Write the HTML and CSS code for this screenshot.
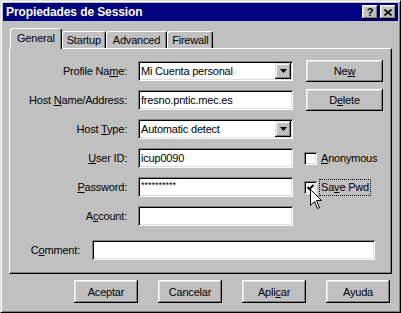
FILE: index.html
```html
<!DOCTYPE html>
<html lang="es">
<head>
<meta charset="UTF-8" />
<title>Propiedades de Session</title>
<link rel="stylesheet" href="styles.css">
</head>
<body>
  <div class="window">
    <div class="titlebar">
      <span class="title">Propiedades de Session</span>
      <div class="title-btns">
        <span class="tbtn help">?</span>
        <span class="tbtn">
          <svg width="8" height="7" viewBox="0 0 8 7"><path d="M0.5 0.5 L7.5 6.5 M7.5 0.5 L0.5 6.5" stroke="#000" stroke-width="1.6" fill="none"/></svg>
        </span>
      </div>
    </div>

    <div class="content">
      <div class="tabs">
        <div class="tab active">General</div>
        <div class="tab">Startup</div>
        <div class="tab wide">Advanced</div>
        <div class="tab">Firewall</div>
      </div>

      <div class="panel">
        <div class="form">
          <label class="lbl">Profile Na<u>m</u>e:</label>
          <div class="field combo"><span>Mi Cuenta personal</span><span class="drop"><svg width="7" height="4" viewBox="0 0 7 4"><polygon points="0,0 7,0 3.5,4" fill="#000"/></svg></span></div>
          <div class="btn side">Ne<u>w</u></div>

          <label class="lbl">Host <u>N</u>ame/Address:</label>
          <div class="field">fresno.pntic.mec.es</div>
          <div class="btn side">D<u>e</u>lete</div>

          <label class="lbl">Host <u>T</u>ype:</label>
          <div class="field combo"><span>Automatic detect</span><span class="drop"><svg width="7" height="4" viewBox="0 0 7 4"><polygon points="0,0 7,0 3.5,4" fill="#000"/></svg></span></div>
          <div></div>

          <label class="lbl"><u>U</u>ser ID:</label>
          <div class="field">icup0090</div>
          <div class="check-row"><span class="box"></span><span><u>A</u>nonymous</span></div>

          <label class="lbl"><u>P</u>assword:</label>
          <div class="field"><span class="stars">**********</span></div>
          <div class="check-row"><span class="box"><svg width="9" height="9" viewBox="0 0 9 9"><polyline points="1.5,4 3.5,6.2 7.5,1.8" stroke="#000" stroke-width="2" fill="none"/></svg></span><span class="focus">Sa<u>v</u>e Pwd</span></div>

          <label class="lbl">A<u>c</u>count:</label>
          <div class="field"></div>
          <div></div>
        </div>

        <div class="comment-row">
          <label class="lbl comment-lbl">C<u>o</u>mment:</label>
          <div class="field comment"></div>
        </div>
      </div>

      <div class="actions">
        <div class="btn action">Aceptar</div>
        <div class="btn action">Cancelar</div>
        <div class="btn action">Apli<u>c</u>ar</div>
        <div class="btn action">Ayuda</div>
      </div>
    </div>

    <svg class="cursor" width="13" height="21" viewBox="0 0 13 21">
      <polygon points="0.5,0.5 0.5,16.5 4.5,12.5 7.5,19.5 9.5,18.5 6.5,11.5 11.5,11.5" fill="#fff" stroke="#000" stroke-width="1"/>
    </svg>
  </div>
</body>
</html>
```

FILE: styles.css
```css
* {
  box-sizing: border-box;
}

body {
  margin: 0;
  background-color: #c0c0c0;
  font-family: "Liberation Sans", Arial, sans-serif;
  font-size: 11px;
  letter-spacing: -0.2px;
  color: #000;
}

/* Ventana */
.window {
  position: relative;
  width: 401px;
  height: 313px;
  background-color: #c0c0c0;
  border: 1px solid;
  border-color: #dfdfdf #000 #000 #dfdfdf;
  box-shadow: inset 1px 1px #fff, inset -1px -1px #808080;
  padding: 2px;
}

.titlebar {
  height: 18px;
  background-color: #000080;
  color: #fff;
  display: flex;
  align-items: center;
  justify-content: space-between;
  padding: 0 2px 0 3px;
}
.title {
  font-weight: 700;
  font-size: 12px;
  letter-spacing: -0.1px;
}
.title-btns {
  display: flex;
  gap: 2px;
}
.tbtn {
  width: 16px;
  height: 14px;
  display: flex;
  align-items: center;
  justify-content: center;
  background-color: #c0c0c0;
  box-shadow: inset -1px -1px #000, inset 1px 1px #fff, inset -2px -2px #808080, inset 2px 2px #dfdfdf;
  color: #000;
  font-weight: 700;
  font-size: 11px;
  letter-spacing: 0;
}

.content {
  padding: 7px 6px 0;
}

/* Pestañas */
.tabs {
  height: 20px;
  display: flex;
  align-items: flex-end;
  padding-left: 1px;
}
.tab {
  height: 17px;
  padding: 0 4px;
  display: flex;
  align-items: center;
  border-top: 1px solid #fff;
  border-left: 1px solid #fff;
  border-right: 1px solid #000;
  box-shadow: inset -1px 0 #808080;
  border-radius: 3px 3px 0 0;
  background-color: #c0c0c0;
}
.tab.wide {
  padding: 0 6px;
}
.tab.active {
  position: relative;
  z-index: 1;
  height: 21px;
  margin-bottom: -1px;
  padding: 0 6px 2px;
}

/* Panel */
.panel {
  height: 226px;
  border: 1px solid;
  border-color: #fff #000 #000 #fff;
  box-shadow: inset -1px -1px #808080;
  padding-top: 12px;
}

.form {
  display: grid;
  grid-template-columns: 117px 155px 79px;
  grid-auto-rows: 20px;
  column-gap: 11px;
  row-gap: 9px;
}

.lbl {
  align-self: center;
  text-align: right;
  white-space: nowrap;
}

.field {
  height: 20px;
  background-color: #fff;
  box-shadow: inset 1px 1px #808080, inset -1px -1px #fff, inset 2px 2px #000, inset -2px -2px #dfdfdf;
  padding: 0 3px;
  display: flex;
  align-items: center;
  white-space: nowrap;
}
.combo {
  padding-right: 2px;
}
.drop {
  margin-left: auto;
  width: 16px;
  height: 16px;
  display: flex;
  align-items: center;
  justify-content: center;
  background-color: #c0c0c0;
  box-shadow: inset -1px -1px #000, inset 1px 1px #dfdfdf, inset -2px -2px #808080, inset 2px 2px #fff;
}
.stars {
  font-size: 9px;
  letter-spacing: 0;
  align-self: flex-start;
  padding-top: 3px;
}

.btn {
  display: flex;
  align-items: center;
  justify-content: center;
  background-color: #c0c0c0;
  box-shadow: inset -1px -1px #000, inset 1px 1px #fff, inset -2px -2px #808080, inset 2px 2px #dfdfdf;
}
.side {
  width: 77px;
  height: 22px;
  margin-left: 2px;
  align-self: center;
}

.check-row {
  display: flex;
  align-items: center;
  gap: 4px;
  align-self: center;
}
.box {
  width: 13px;
  height: 13px;
  background-color: #fff;
  box-shadow: inset 1px 1px #808080, inset -1px -1px #fff, inset 2px 2px #000, inset -2px -2px #dfdfdf;
  display: flex;
  align-items: center;
  justify-content: center;
}
.focus {
  outline: 1px dotted #000;
  padding: 1px 1px 2px;
  margin-left: -1px;
}

.comment-row {
  display: flex;
  align-items: center;
  gap: 12px;
  margin-top: 14px;
}
.comment-lbl {
  width: 70px;
}
.comment {
  width: 283px;
}

/* Botones inferiores */
.actions {
  display: flex;
  justify-content: flex-end;
  gap: 20px;
  margin-top: 6px;
  padding-right: 2px;
}
.action {
  width: 64px;
  height: 23px;
}

/* Puntero del ratón */
.cursor {
  position: absolute;
  left: 309px;
  top: 188px;
}
```
